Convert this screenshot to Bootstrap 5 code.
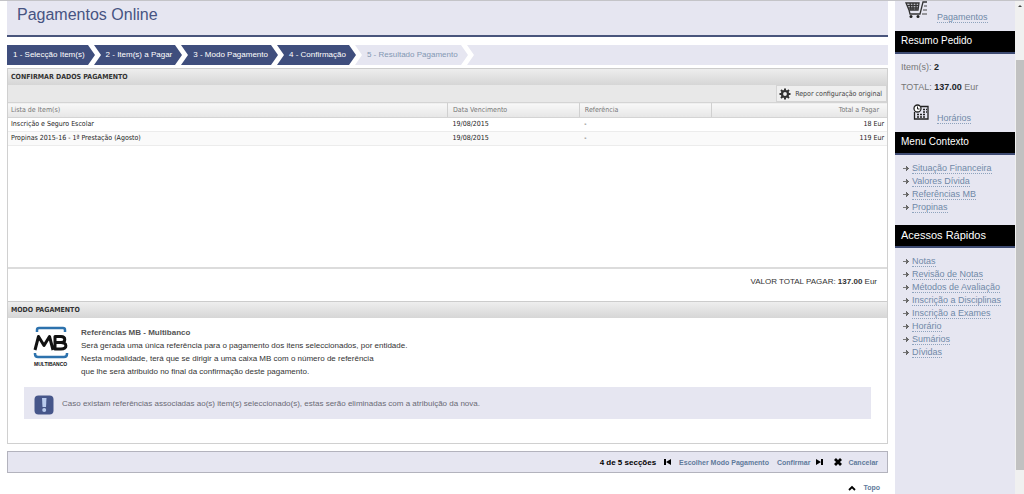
<!DOCTYPE html>
<html lang="pt">
<head>
<meta charset="utf-8">
<meta name="viewport" content="width=device-width, initial-scale=1">
<title>Pagamentos Online</title>
<link href="https://cdn.jsdelivr.net/npm/bootstrap@5.3.0/dist/css/bootstrap.min.css" rel="stylesheet">
<style>
:root{--navy:#3f4e7d;--lilac:#e6e6f1;--steel:#7089a8;--line:#d0d0d0}
body{font-family:"Liberation Sans",Arial,sans-serif;font-size:8px;line-height:13px;color:#333;background:#fff}
a{color:var(--steel);text-decoration:none}
.shell{min-height:100vh;border-top:1px solid #c4c4c8}
.main-col{padding:0 7px}
.page-title{background:var(--lilac);border-bottom:2px solid #49557c;height:36px;padding:4px 10px}
.page-title h1{font-size:16px;line-height:20px;color:#475482;font-weight:400}
.steps{background:var(--lilac);height:20px;margin-top:8px}
.step{height:20px;line-height:20px;padding-left:6px;background:var(--navy);color:#fff}
.step + .step{padding-left:5px}
.step.todo{background:var(--lilac);color:#8397b3}
.step svg{width:16px;height:20px}
.panel{border:1px solid var(--line);border-top:0;margin-top:3px}
.panel-head{height:17px;font:bold 7px/17px "DejaVu Sans Condensed","DejaVu Sans",sans-serif;padding-left:3px;background:linear-gradient(#eee,#d6d6d6);border-top:1px solid #ccc;color:#333;margin:0}
.toolbar-row{height:17px;background:#e8e8e8}
.reset-btn{font:7px/16px "DejaVu Sans Condensed","DejaVu Sans",sans-serif;border:1px solid #d4d4d4;background:#efefef;color:#444;padding:0 4px 0 2px;height:17px}
.grid-area{min-height:167px;border-bottom:2px solid #dcdcdc}
.items{font:7px/13px "DejaVu Sans Condensed","DejaVu Sans",sans-serif;width:100%;table-layout:fixed}
.items th{font-weight:400;color:#777;background:linear-gradient(#f8f8f8,#e6e6e6);border:solid #d4d4d4;border-width:1px 0;height:15px;padding:0 3px}
.items th + th{border-left:1px solid #d0d0d0}
.items th + th,.items td + td{padding-left:5px}
.items th:last-child{padding-right:8px}
.items td{color:#222;height:14px;padding:0 3px;border-bottom:1px solid #ececec}
.items tr:nth-child(even) td{background:#fafafa}
.total{height:32px;line-height:26px;padding-right:10px}
.pay-body{padding:8px 16px 24px}
.pay-text b{color:#555}
.notice{background:var(--lilac);height:32px;color:#6a6a75;padding-left:10px;margin-top:9px}
.actions{background:var(--lilac);border:1px solid #b3b3bd;height:22px;margin-top:7px;padding-right:9px}
.act{font-size:7px;font-weight:700;display:inline-flex;align-items:center;color:#5f7a9b}
.side{width:120px;background:var(--lilac);font-size:9px;color:#777}
.side-head{background:#000;color:#fff;border-bottom:2px solid #3e4b72;height:23px;padding-left:6px;font-size:10px;line-height:20px;font-weight:400;margin:0}
.side-head.wide{font-size:11px}
.side a{border-bottom:1px dotted #8ea3bd;line-height:10px}
.side-top{height:30px;padding:0 0 8px 10px}
.summary{padding:3px 0 0 6px;height:48px;line-height:20px}
.side-links{padding:7px 0 11px 8px;margin:0}
.side-links li{height:13px;display:flex;align-items:center}
.side-links li::before{content:"";width:9px;height:5px;background:linear-gradient(#777,#777) 0 2px/4px 1px no-repeat,conic-gradient(from 225deg at 100% 50%,#666 90deg,transparent 0) 3px 0/3px 5px no-repeat}
.track{width:9px;background:#f0f0f0}
.thumb{background:#c1c1c1;height:83%;margin:0 0 0 1px}
.track svg{display:block;margin-bottom:50px}
</style>
</head>
<body>
<div class="shell d-flex">
  <main class="main-col flex-grow-1">
    <header class="page-title"><h1 class="m-0">Pagamentos Online</h1></header>
    <nav class="steps d-flex" aria-label="Passos">
      <div class="step d-flex">1 - Selecção Item(s)<svg viewBox="0 0 16 20"><path d="M3 0h6l7 10-7 10H3l7-10z" fill="#fff"/></svg></div>
      <div class="step d-flex">2 - Item(s) a Pagar<svg viewBox="0 0 16 20"><path d="M3 0h6l7 10-7 10H3l7-10z" fill="#fff"/></svg></div>
      <div class="step d-flex">3 - Modo Pagamento<svg viewBox="0 0 16 20"><path d="M3 0h6l7 10-7 10H3l7-10z" fill="#fff"/></svg></div>
      <div class="step d-flex">4 - Confirmação<svg viewBox="0 0 16 20"><path d="M7 0h9v20H7l7-10z" fill="#e6e6f1"/><path d="M3 0h6l7 10-7 10H3l7-10z" fill="#fff"/></svg></div>
      <div class="step todo d-flex">5 - Resultado Pagamento<svg viewBox="0 0 16 20"><path d="M3 0h6l7 10-7 10H3l7-10z" fill="#fff"/></svg></div>
    </nav>
    <section class="panel">
      <h2 class="panel-head">CONFIRMAR DADOS PAGAMENTO</h2>
      <div class="toolbar-row d-flex justify-content-end">
        <button class="reset-btn d-flex align-items-center" type="button"><svg width="12" height="12" viewBox="0 0 12 12" class="me-1"><circle cx="6" cy="6" r="3" fill="none" stroke="#333" stroke-width="2.2"/><path d="M6 .5v2M6 9.500v2M.5 6h2M9.500 6h2M2 2l1.600 1.600M8.400 8.400L10 10M10 2L8.400 3.600M3.600 8.400L2 10" stroke="#333" stroke-width="2"/></svg>Repor configuração original</button>
      </div>
      <div class="grid-area">
        <table class="items">
          <colgroup><col style="width:50%"><col style="width:15%"><col style="width:15%"><col style="width:20%"></colgroup>
          <thead><tr><th>Lista de Item(s)</th><th>Data Vencimento</th><th>Referência</th><th class="text-end">Total a Pagar</th></tr></thead>
          <tbody>
            <tr><td>Inscrição e Seguro Escolar</td><td>19/08/2015</td><td>-</td><td class="text-end">18 Eur</td></tr>
            <tr><td>Propinas 2015-16 - 1ª Prestação (Agosto)</td><td>19/08/2015</td><td>-</td><td class="text-end">119 Eur</td></tr>
          </tbody>
        </table>
      </div>
      <div class="total text-end">VALOR TOTAL PAGAR: <b>137.00</b> Eur</div>
      <h2 class="panel-head">MODO PAGAMENTO</h2>
      <div class="pay-body">
        <div class="d-flex">
          <svg width="37" height="42" viewBox="0 0 37 42" class="ms-2 me-2" role="img" aria-label="Multibanco">
            <path d="M5 6V4q0-2 2-2h24q2 0 2 2v2M3 27v1q0 3 3 3h26q3 0 3-3v-1" fill="none" stroke="#2d72ad" stroke-width="2.500"/>
            <path d="M3 24L6.500 10.500l5.500 9 5.500-9L21 24M23 10.500V23h6c7 0 6-6.500 0-6.500h-5h5c5 0 5-6 0-6z" fill="none" stroke="#111" stroke-width="3" stroke-linejoin="round"/>
            <text x="2" y="40" font-size="5" font-weight="700" fill="#111">MULTIBANCO</text>
          </svg>
          <div class="pay-text ps-1"><b>Referências MB - Multibanco</b><br>Será gerada uma única referência para o pagamento dos itens seleccionados, por entidade.<br>Nesta modalidade, terá que se dirigir a uma caixa MB com o número de referência<br>que lhe será atribuido no final da confirmação deste pagamento.</div>
        </div>
        <div class="notice d-flex align-items-center" role="note">
          <svg width="20" height="20" viewBox="0 0 20 20" class="me-2 mt-1"><rect x=".5" y=".5" width="19" height="19" rx="4" fill="#46568a"/><path d="M8 3h4.500L12 12H8.500z" fill="#b9cbee"/><circle cx="10.200" cy="15" r="2" fill="#b9cbee"/></svg>
          <span>Caso existam referências associadas ao(s) item(s) seleccionado(s), estas serão eliminadas com a atribuição da nova.</span>
        </div>
      </div>
    </section>
    <div class="actions d-flex align-items-center justify-content-end gap-2">
      <b class="text-black">4 de 5 secções</b>
      <a class="act" href="#"><svg width="15" height="8" viewBox="0 0 15 8"><path d="M0 1h2v6H0zM7 1v6L2 4z" fill="#000"/></svg>Escolher Modo Pagamento</a>
      <a class="act" href="#">Confirmar<svg width="14" height="8" viewBox="0 0 14 8"><path d="M6 1l5 3-5 3zM11 1h2v6h-2z" fill="#000"/></svg></a>
      <a class="act" href="#"><svg width="16" height="8" viewBox="0 0 16 8"><path d="M3 1l6 6M9 1L3 7" stroke="#000" stroke-width="2.800"/></svg>Cancelar</a>
    </div>
    <div class="text-end pt-2 pe-2"><a class="act" href="#"><svg width="15" height="8" viewBox="0 0 15 8"><path d="M1 6l3-3 3 3" fill="none" stroke="#000" stroke-width="1.800"/></svg>Topo</a></div>
  </main>
  <aside class="side flex-shrink-0">
    <div class="side-top d-flex align-items-end"><svg width="24" height="19" viewBox="0 0 24 19" class="me-2 mb-1"><path d="M1 3h13l-1 7H4zM2 5.500h12M3 8h10M5 3l1 7M8 3v7M11 3v7M22 2h-4l-3 12H5l-1-4" fill="none" stroke="#333" stroke-width="1.300"/><circle cx="6" cy="16.500" r="1.500" fill="#222"/><circle cx="13" cy="16.500" r="1.500" fill="#222"/><path d="M19 6h3M18 10h4M17 14h5" stroke="#444" stroke-width="1.200"/></svg><a href="#">Pagamentos</a></div>
    <h3 class="side-head">Resumo Pedido</h3>
    <div class="summary">Item(s): <b class="text-dark">2</b><br>TOTAL: <b class="text-dark">137.00</b> Eur</div>
    <div class="side-top d-flex align-items-end"><svg width="24" height="16" viewBox="-8 0 24 16" class="me-2 mb-1"><path d="M8 2.500h7v12.500H1.500V8" fill="none" stroke="#222" stroke-width="1.300"/><circle cx="4.500" cy="4.500" r="3.500" fill="#fff" stroke="#222" stroke-width="1.300"/><path d="M4.500 2.500v2.500h2" fill="none" stroke="#222"/><path d="M4 10.500h9M4 13h9M10 5.500h4M10 8h4" stroke="#222" stroke-width="1.500" stroke-dasharray="2 1"/></svg><a href="#">Horários</a></div>
    <h3 class="side-head">Menu Contexto</h3>
    <ul class="side-links list-unstyled">
      <li><a href="#">Situação Financeira</a></li><li><a href="#">Valores Dívida</a></li><li><a href="#">Referências MB</a></li><li><a href="#">Propinas</a></li>
    </ul>
    <h3 class="side-head wide">Acessos Rápidos</h3>
    <ul class="side-links list-unstyled">
      <li><a href="#">Notas</a></li><li><a href="#">Revisão de Notas</a></li><li><a href="#">Métodos de Avaliação</a></li><li><a href="#">Inscrição a Disciplinas</a></li><li><a href="#">Inscrição a Exames</a></li><li><a href="#">Horário</a></li><li><a href="#">Sumários</a></li><li><a href="#">Dívidas</a></li>
    </ul>
  </aside>
  <div class="track flex-shrink-0" aria-hidden="true"><svg width="9" height="9" viewBox="0 0 9 9"><path d="M3 6l2-2 2 2z" fill="#444"/></svg><div class="thumb"></div></div>
</div>
<script src="https://cdn.jsdelivr.net/npm/bootstrap@5.3.0/dist/js/bootstrap.bundle.min.js"></script>
</body>
</html>
